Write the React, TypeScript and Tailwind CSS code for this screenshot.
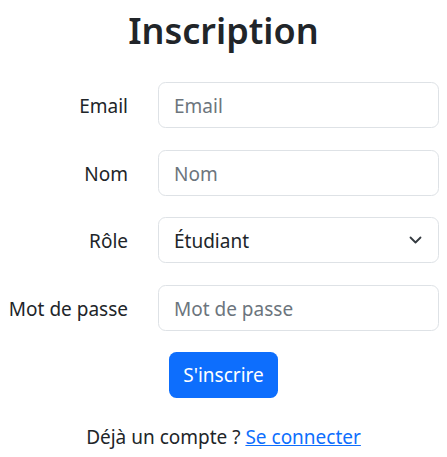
import { useState } from 'react';

const fields = [
  { label: 'Email', type: 'email', placeholder: 'Email' },
  { label: 'Nom', type: 'text', placeholder: 'Nom' },
];

export default function App() {
  const [role, setRole] = useState('etudiant');

  return (
    <div className="w-[447px] h-[457px] bg-white text-[#212529] font-['Noto_Sans',sans-serif] text-[19px]">
      <h2 className="h-[62px] flex items-center justify-center text-[36px] font-semibold leading-[1.2]">
        Inscription
      </h2>

      <form className="flex flex-col mt-[20px]" onSubmit={(e) => e.preventDefault()}>
        <div className="flex flex-col gap-[21.5px]">
          {fields.map((f) => (
            <div key={f.label} className="flex items-center">
              <label className="w-[128px] text-right leading-[1.5] pt-[3px]">{f.label}</label>
              <input
                type={f.type}
                placeholder={f.placeholder}
                className="ml-[30px] w-[281px] h-[46px] px-[15px] pt-[2px] rounded-[7.5px] border border-[#dee2e6] placeholder:text-[#6c757d] outline-none"
              />
            </div>
          ))}

          <div className="flex items-center">
            <label className="w-[128px] text-right leading-[1.5] pt-[3px]">Rôle</label>
            <div className="relative ml-[30px] w-[281px] h-[46px]">
              <select
                value={role}
                onChange={(e) => setRole(e.target.value)}
                className="appearance-none w-full h-full pl-[15px] pr-[45px] pt-[2px] rounded-[7.5px] border border-[#dee2e6] bg-white outline-none"
              >
                <option value="etudiant">Étudiant</option>
                <option value="enseignant">Enseignant</option>
              </select>
              <svg
                className="absolute right-[17px] top-[19px] w-[13px] h-[8px] pointer-events-none"
                viewBox="0 0 13 8"
                fill="none"
                stroke="#343a40"
                strokeWidth="1.8"
                strokeLinecap="round"
                strokeLinejoin="round"
              >
                <path d="M1.5 1.5 6.5 6.5 11.5 1.5" />
              </svg>
            </div>
          </div>

          <div className="flex items-center">
            <label className="w-[128px] text-right leading-[1.5] pt-[3px]">Mot de passe</label>
            <input
              type="password"
              placeholder="Mot de passe"
              className="ml-[30px] w-[281px] h-[46px] px-[15px] pt-[2px] rounded-[7.5px] border border-[#dee2e6] placeholder:text-[#6c757d] outline-none"
            />
          </div>
        </div>

        <div className="flex justify-center mt-[21px]">
          <button
            type="submit"
            className="h-[46px] px-[14px] pt-[2px] rounded-[7.5px] bg-[#0d6efd] text-white leading-[1.5]"
          >
            S'inscrire
          </button>
        </div>

        <p className="text-center mt-[25px] leading-[1.5]">
          Déjà un compte ?{' '}
          <a href="#" className="text-[#0d6efd] underline">
            Se connecter
          </a>
        </p>
      </form>
    </div>
  );
}
